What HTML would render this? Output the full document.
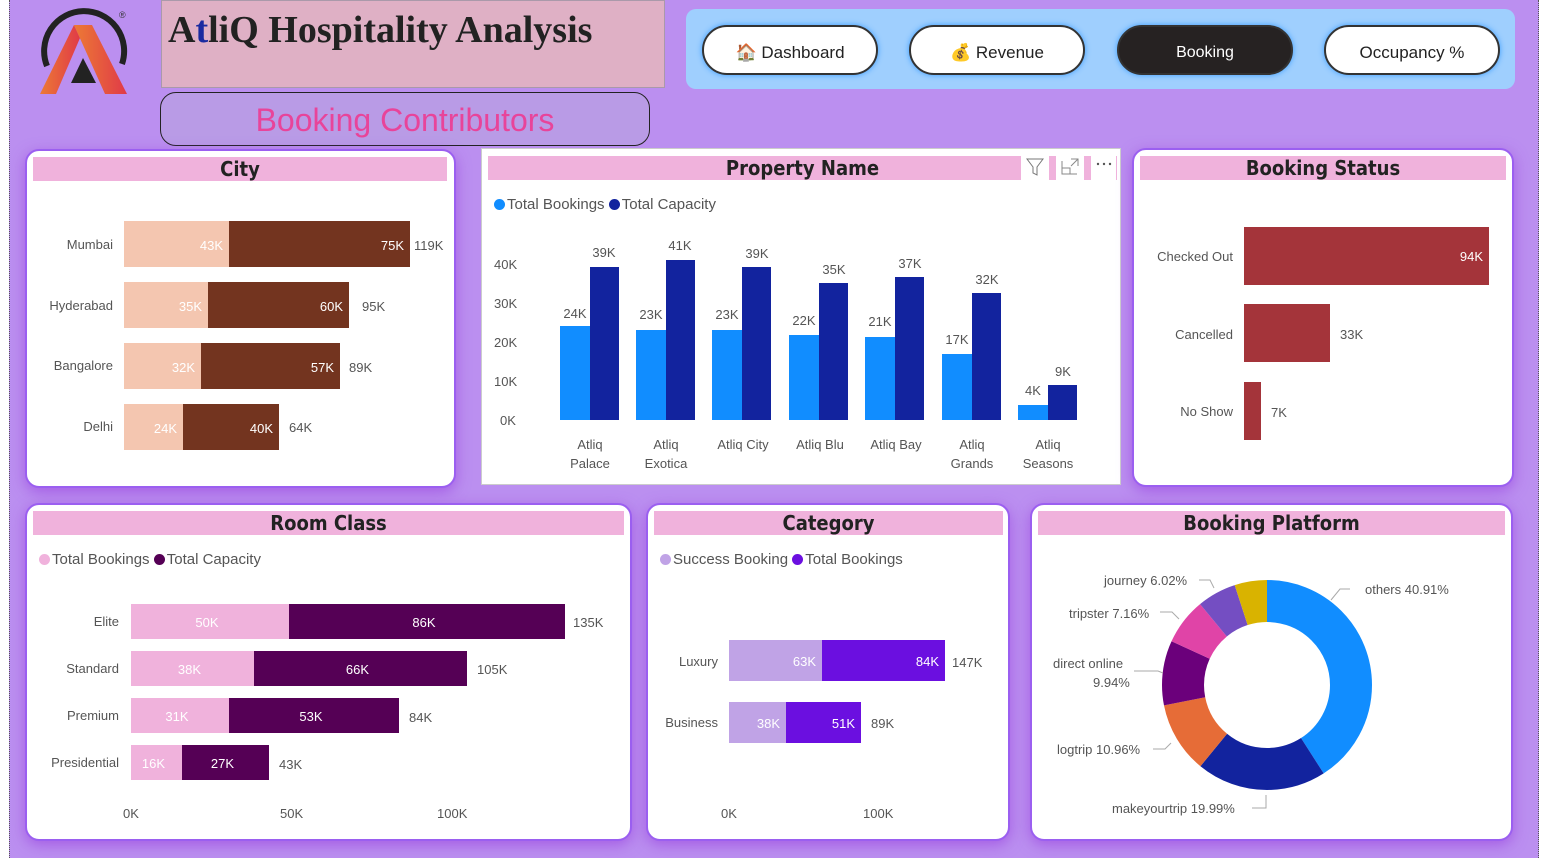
<!DOCTYPE html>
<html><head><meta charset="utf-8"><style>
*{margin:0;padding:0;box-sizing:border-box}
body{width:1567px;height:858px;background:#fff;position:relative;overflow:hidden;font-family:"Liberation Sans",sans-serif}
.bg{position:absolute;left:9px;top:0;width:1530px;height:858px;background:#bb8ff0;border-left:1px dotted #555;border-right:1px dotted #555}
.a{position:absolute}
.card{position:absolute;background:#fff;border:2px solid #9b5ff0;border-radius:14px;box-shadow:0 4px 14px rgba(150,60,220,.6)}
.hd{position:absolute;background:#f0b2dc;font-weight:bold;font-size:20px;color:#222;text-align:center;line-height:24px;font-family:"DejaVu Sans Condensed","Liberation Sans",sans-serif}
.t{position:absolute;font-size:13px;color:#555;white-space:nowrap}
.r{text-align:right}
.b{position:absolute;color:#fff;font-size:13px;text-align:right;padding-right:6px;white-space:nowrap}
.btn{position:absolute;top:25px;width:176px;height:50px;border-radius:25px;background:#fff;border:2px solid #333;box-shadow:0 0 6px #3a9cff;font-size:17px;text-align:center;line-height:52px;color:#222}
.dot{display:inline-block;width:11px;height:11px;border-radius:50%;vertical-align:-1px;margin-right:2px}
</style></head><body>
<div class="bg"></div>
<!-- logo -->
<svg class="a" style="left:0;top:0" width="140" height="100" viewBox="0 0 140 100">
<defs><linearGradient id="g" x1="0" y1="0" x2="1" y2="0"><stop offset="0" stop-color="#ec7a35"/><stop offset="1" stop-color="#e03a48"/></linearGradient></defs>
<path d="M47 66 A40 40 0 1 1 122 64" fill="none" stroke="#222" stroke-width="6"/>
<polygon points="40,94 56,94 80,38 74,25" fill="url(#g)"/>
<polygon points="74,25 92,25 127,94 105,94" fill="url(#g)"/>
<polygon points="83,58 96,83 71,83" fill="#222"/>
<text x="119" y="18" font-size="9" fill="#333">®</text>
</svg>
<div class="a" style="left:161px;top:0;width:504px;height:88px;background:#dfb0c5;border:1px solid #a9a"></div>
<div class="a" style="left:168px;top:8px;font-family:'Liberation Serif',serif;font-weight:bold;font-size:38px;color:#222">A<span style="color:#1a2aa0">t</span>liQ Hospitality Analysis</div>
<div class="a" style="left:160px;top:92px;width:490px;height:54px;border:1.5px solid #222;border-radius:16px;background:#b99be6;color:#e8449a;font-size:32px;text-align:center;line-height:54px">Booking Contributors</div>
<div class="a" style="left:686px;top:9px;width:829px;height:80px;background:#9fcffe;border-radius:10px"></div>
<div class="btn" style="left:702px">🏠 Dashboard</div>
<div class="btn" style="left:909px">💰 Revenue</div>
<div class="btn" style="left:1117px;background:#262222;color:#fff;font-size:16px">Booking</div>
<div class="btn" style="left:1324px">Occupancy %</div>

<!-- City -->
<div class="card" style="left:25px;top:149px;width:431px;height:339px"></div>
<div class="hd" style="left:33px;top:157px;width:414px">City</div>
<div class="t r" style="left:30px;top:237px;width:83px">Mumbai</div>
<div class="b" style="left:124px;top:221px;width:105px;height:46px;line-height:50px;background:#f4c6b0">43K</div>
<div class="b" style="left:229px;top:221px;width:181px;height:46px;line-height:50px;background:#73341f">75K</div>
<div class="t" style="left:414px;top:238px">119K</div>
<div class="t r" style="left:30px;top:298px;width:83px">Hyderabad</div>
<div class="b" style="left:124px;top:282px;width:84px;height:46px;line-height:50px;background:#f4c6b0">35K</div>
<div class="b" style="left:208px;top:282px;width:141px;height:46px;line-height:50px;background:#73341f">60K</div>
<div class="t" style="left:362px;top:299px">95K</div>
<div class="t r" style="left:30px;top:358px;width:83px">Bangalore</div>
<div class="b" style="left:124px;top:343px;width:77px;height:46px;line-height:50px;background:#f4c6b0">32K</div>
<div class="b" style="left:201px;top:343px;width:139px;height:46px;line-height:50px;background:#73341f">57K</div>
<div class="t" style="left:349px;top:360px">89K</div>
<div class="t r" style="left:30px;top:419px;width:83px">Delhi</div>
<div class="b" style="left:124px;top:404px;width:59px;height:46px;line-height:50px;background:#f4c6b0">24K</div>
<div class="b" style="left:183px;top:404px;width:96px;height:46px;line-height:50px;background:#73341f">40K</div>
<div class="t" style="left:289px;top:420px">64K</div>

<!-- Property -->
<div class="a" style="left:481px;top:148px;width:640px;height:337px;background:#fff;border:1px solid #ccc"></div>
<div class="hd" style="left:488px;top:156px;width:629px">Property Name</div>
<svg class="a" style="left:1021px;top:153px" width="95" height="27">
<rect width="28" height="27" fill="#fff"/><path d="M6 6 L22 6 L16 14 L16 22 L12 20 L12 14 Z" fill="none" stroke="#777"/>
<rect x="35" width="28" height="27" fill="#fff"/><path d="M41 8 L41 21 L56 21 M41 15 L49 15 L49 21 M50 6 L57 6 L57 13 M57 6 L50 13" fill="none" stroke="#888"/>
<rect x="70" width="25" height="27" fill="#fff"/><circle cx="77" cy="11" r="1.2" fill="#555"/><circle cx="83" cy="11" r="1.2" fill="#555"/><circle cx="89" cy="11" r="1.2" fill="#555"/>
</svg>
<div class="t" style="left:494px;top:196px;font-size:15px"><span class="dot" style="background:#118dff"></span>Total Bookings <span class="dot" style="background:#12239e"></span>Total Capacity</div>
<div class="t" style="left:494px;top:257px">40K</div>
<div class="t" style="left:494px;top:296px">30K</div>
<div class="t" style="left:494px;top:335px">20K</div>
<div class="t" style="left:494px;top:374px">10K</div>
<div class="t" style="left:500px;top:413px">0K</div>
<svg class="a" style="left:481px;top:230px" width="640" height="250">
<g font-family="Liberation Sans" font-size="13" fill="#555" text-anchor="middle">
<rect x="79" y="96" width="30" height="94" fill="#118dff"/><rect x="109" y="37" width="29" height="153" fill="#12239e"/><text x="94" y="88">24K</text><text x="123" y="27">39K</text>
<rect x="155" y="100" width="30" height="90" fill="#118dff"/><rect x="185" y="30" width="29" height="160" fill="#12239e"/><text x="170" y="89">23K</text><text x="199" y="20">41K</text>
<rect x="231" y="100" width="30" height="90" fill="#118dff"/><rect x="261" y="37" width="29" height="153" fill="#12239e"/><text x="246" y="89">23K</text><text x="276" y="28">39K</text>
<rect x="308" y="105" width="30" height="85" fill="#118dff"/><rect x="338" y="53" width="29" height="137" fill="#12239e"/><text x="323" y="95">22K</text><text x="353" y="44">35K</text>
<rect x="384" y="107" width="30" height="83" fill="#118dff"/><rect x="414" y="47" width="29" height="143" fill="#12239e"/><text x="399" y="96">21K</text><text x="429" y="38">37K</text>
<rect x="461" y="124" width="30" height="66" fill="#118dff"/><rect x="491" y="63" width="29" height="127" fill="#12239e"/><text x="476" y="114">17K</text><text x="506" y="54">32K</text>
<rect x="537" y="175" width="30" height="15" fill="#118dff"/><rect x="567" y="155" width="29" height="35" fill="#12239e"/><text x="552" y="165">4K</text><text x="582" y="146">9K</text>
<text x="109" y="219">Atliq</text><text x="109" y="238">Palace</text>
<text x="185" y="219">Atliq</text><text x="185" y="238">Exotica</text>
<text x="262" y="219">Atliq City</text>
<text x="339" y="219">Atliq Blu</text>
<text x="415" y="219">Atliq Bay</text>
<text x="491" y="219">Atliq</text><text x="491" y="238">Grands</text>
<text x="567" y="219">Atliq</text><text x="567" y="238">Seasons</text>
</g></svg>

<!-- Booking status -->
<div class="card" style="left:1132px;top:148px;width:382px;height:339px"></div>
<div class="hd" style="left:1140px;top:156px;width:366px">Booking Status</div>
<div class="t r" style="left:1133px;top:249px;width:100px">Checked Out</div>
<div class="b" style="left:1244px;top:227px;width:245px;height:58px;line-height:60px;background:#a4343a">94K</div>
<div class="t r" style="left:1133px;top:327px;width:100px">Cancelled</div>
<div class="a" style="left:1244px;top:304px;width:86px;height:58px;background:#a4343a"></div>
<div class="t" style="left:1340px;top:327px">33K</div>
<div class="t r" style="left:1133px;top:404px;width:100px">No Show</div>
<div class="a" style="left:1244px;top:382px;width:17px;height:58px;background:#a4343a"></div>
<div class="t" style="left:1271px;top:405px">7K</div>

<!-- Room class -->
<div class="card" style="left:25px;top:503px;width:607px;height:338px"></div>
<div class="hd" style="left:33px;top:511px;width:591px">Room Class</div>
<div class="t" style="left:39px;top:551px;font-size:15px"><span class="dot" style="background:#f0b2dc"></span>Total Bookings <span class="dot" style="background:#550055"></span>Total Capacity</div>
<div class="t r" style="left:30px;top:614px;width:89px">Elite</div>
<div class="b" style="left:131px;top:604px;width:158px;height:35px;line-height:38px;background:#f0b2dc;text-align:center">50K</div>
<div class="b" style="left:289px;top:604px;width:276px;height:35px;line-height:38px;background:#550055;text-align:center">86K</div>
<div class="t" style="left:573px;top:615px">135K</div>
<div class="t r" style="left:30px;top:661px;width:89px">Standard</div>
<div class="b" style="left:131px;top:651px;width:123px;height:35px;line-height:38px;background:#f0b2dc;text-align:center">38K</div>
<div class="b" style="left:254px;top:651px;width:213px;height:35px;line-height:38px;background:#550055;text-align:center">66K</div>
<div class="t" style="left:477px;top:662px">105K</div>
<div class="t r" style="left:30px;top:708px;width:89px">Premium</div>
<div class="b" style="left:131px;top:698px;width:98px;height:35px;line-height:38px;background:#f0b2dc;text-align:center">31K</div>
<div class="b" style="left:229px;top:698px;width:170px;height:35px;line-height:38px;background:#550055;text-align:center">53K</div>
<div class="t" style="left:409px;top:710px">84K</div>
<div class="t r" style="left:30px;top:755px;width:89px">Presidential</div>
<div class="b" style="left:131px;top:745px;width:51px;height:35px;line-height:38px;background:#f0b2dc;text-align:center">16K</div>
<div class="b" style="left:182px;top:745px;width:87px;height:35px;line-height:38px;background:#550055;text-align:center">27K</div>
<div class="t" style="left:279px;top:757px">43K</div>
<div class="t" style="left:123px;top:806px">0K</div>
<div class="t" style="left:280px;top:806px">50K</div>
<div class="t" style="left:437px;top:806px">100K</div>

<!-- Category -->
<div class="card" style="left:646px;top:503px;width:364px;height:338px"></div>
<div class="hd" style="left:654px;top:511px;width:349px">Category</div>
<div class="t" style="left:660px;top:551px;font-size:15px"><span class="dot" style="background:#c0a3e6"></span>Success Booking <span class="dot" style="background:#6b0fe0"></span>Total Bookings</div>
<div class="t r" style="left:650px;top:654px;width:68px">Luxury</div>
<div class="b" style="left:729px;top:640px;width:93px;height:41px;line-height:44px;background:#c0a3e6">63K</div>
<div class="b" style="left:822px;top:640px;width:123px;height:41px;line-height:44px;background:#6b0fe0">84K</div>
<div class="t" style="left:952px;top:655px">147K</div>
<div class="t r" style="left:650px;top:715px;width:68px">Business</div>
<div class="b" style="left:729px;top:702px;width:57px;height:41px;line-height:44px;background:#c0a3e6">38K</div>
<div class="b" style="left:786px;top:702px;width:75px;height:41px;line-height:44px;background:#6b0fe0">51K</div>
<div class="t" style="left:871px;top:716px">89K</div>
<div class="t" style="left:721px;top:806px">0K</div>
<div class="t" style="left:863px;top:806px">100K</div>

<!-- Platform -->
<div class="card" style="left:1030px;top:503px;width:483px;height:338px"></div>
<div class="hd" style="left:1038px;top:511px;width:467px">Booking Platform</div>
<svg class="a" style="left:1030px;top:503px" width="483" height="338">
<g transform="translate(237 182) rotate(-90)" fill="none" stroke-width="42">
<circle r="84" stroke="#118dff" stroke-dasharray="215.92 600" stroke-dashoffset="0"/>
<circle r="84" stroke="#12239e" stroke-dasharray="105.51 600" stroke-dashoffset="-215.92"/>
<circle r="84" stroke="#e66c37" stroke-dasharray="57.85 600" stroke-dashoffset="-321.43"/>
<circle r="84" stroke="#6b007b" stroke-dasharray="52.46 600" stroke-dashoffset="-379.28"/>
<circle r="84" stroke="#e044a7" stroke-dasharray="37.79 600" stroke-dashoffset="-431.74"/>
<circle r="84" stroke="#744ec2" stroke-dasharray="31.77 600" stroke-dashoffset="-469.53"/>
<circle r="84" stroke="#d9b300" stroke-dasharray="26.49 600" stroke-dashoffset="-501.30"/>
</g>
<g stroke="#aaa" fill="none">
<path d="M301 97 L310 86 L320 86"/><path d="M169 77 L180 77 L184 85"/><path d="M130 109 L142 109 L149 116"/>
<path d="M104 168 L128 168 L133 170"/><path d="M123 246 L135 246 L141 240"/><path d="M222 305 L236 305 L236 292"/>
</g>
<g font-family="Liberation Sans" font-size="13" fill="#555">
<text x="335" y="91">others 40.91%</text>
<text x="74" y="82">journey 6.02%</text>
<text x="39" y="115">tripster 7.16%</text>
<text x="23" y="165">direct online</text><text x="63" y="184">9.94%</text>
<text x="27" y="251">logtrip 10.96%</text>
<text x="82" y="310">makeyourtrip 19.99%</text>
</g></svg>
</body></html>
